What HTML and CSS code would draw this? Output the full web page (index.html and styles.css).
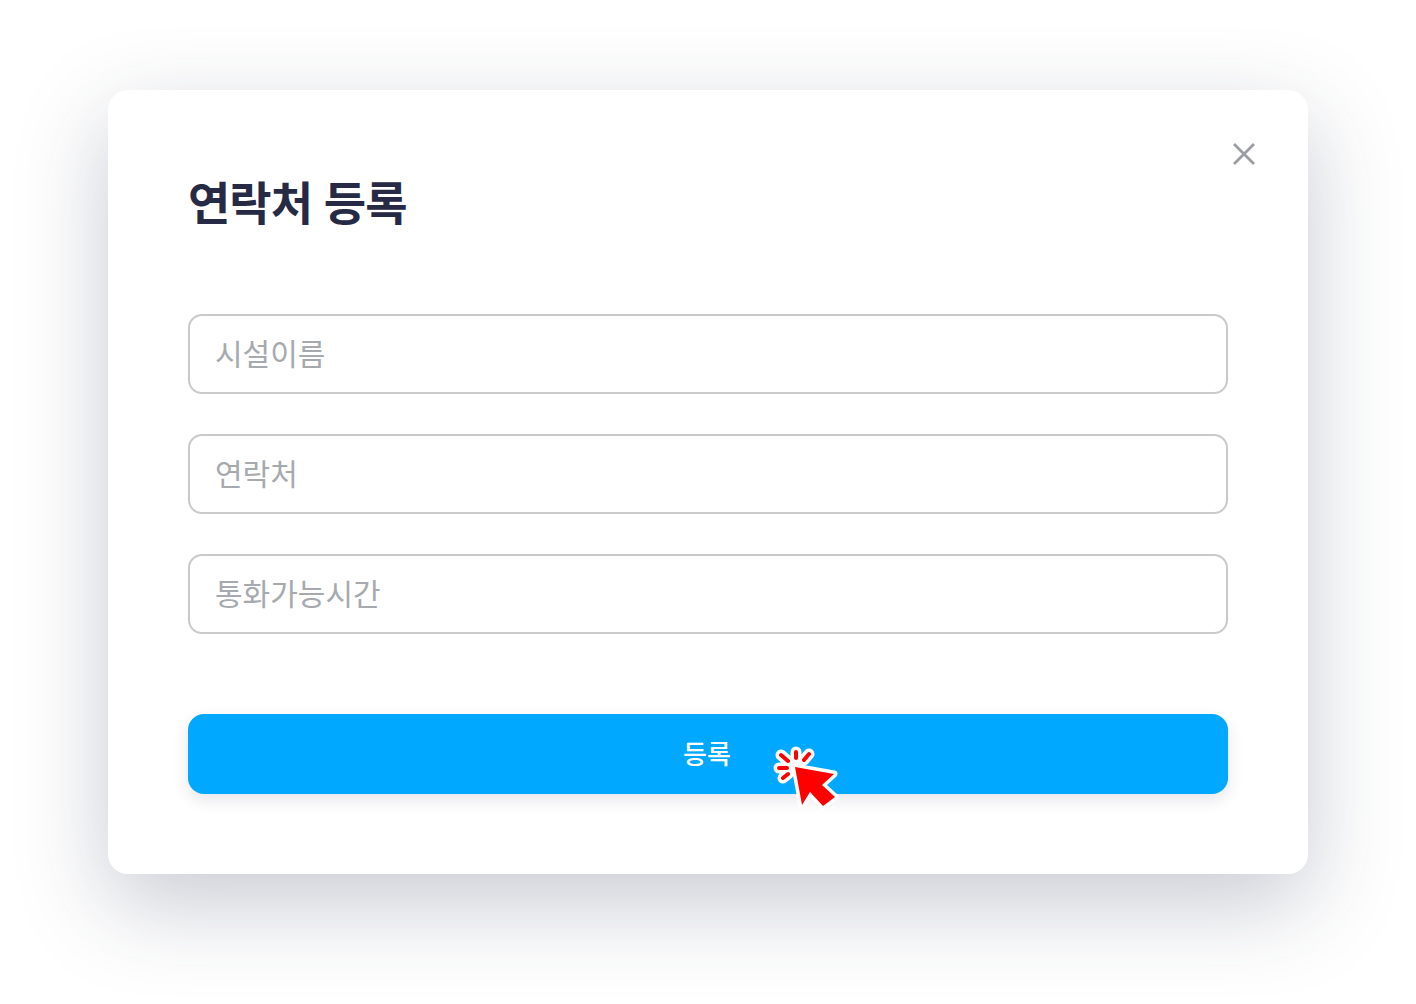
FILE: index.html
```html
<!DOCTYPE html>
<html lang="ko">
<head>
  <meta charset="UTF-8">
  <meta name="viewport" content="width=device-width, initial-scale=1.0">
  <title>연락처 등록</title>
  <link rel="stylesheet" href="styles.css">
</head>
<body>
  <div class="modal">
    <button class="close" aria-label="닫기">
      <svg width="24" height="24" viewBox="0 0 24 24">
        <path d="M2 2L22 22M22 2L2 22" fill="none" stroke="#9a9ea3" stroke-width="2.8"/>
      </svg>
    </button>
    <h1 class="title">연락처 등록</h1>
    <form class="form">
      <input class="field" type="text" placeholder="시설이름">
      <input class="field" type="text" placeholder="연락처">
      <input class="field" type="text" placeholder="통화가능시간">
      <div class="submit-wrap">
        <button class="btn" type="button">등록</button>
        <svg class="cursor" width="90" height="80" viewBox="0 0 90 80">
          <!-- white outline -->
          <g fill="none" stroke="#fff" stroke-width="11" stroke-linecap="round">
            <path d="M36 17V23M49 19L44 25M21 20L28 26M19 33H27M23 43L28 39"/>
          </g>
          <circle cx="34" cy="31" r="10" fill="#fff"/>
          <path d="M35 32L74 39L62 50L75 62L63 71L50 57L42 70Z" fill="#fff" stroke="#fff" stroke-width="7" stroke-linejoin="round"/>
          <!-- red clicks -->
          <g fill="none" stroke="#f00" stroke-width="4" stroke-linecap="round">
            <path d="M36 17V23M49 19L44 25M21 20L28 26M19 33H27M23 43L28 39"/>
          </g>
          <path d="M35 32L74 39L62 50L75 62L63 71L50 57L42 70Z" fill="#f00"/>
        </svg>
      </div>
    </form>
  </div>
</body>
</html>
```

FILE: styles.css
```css
body {
  font-family: "Noto Sans CJK KR", "Noto Sans", sans-serif;
  background-color: #fff;
  margin: 0;
  height: 1004px;
  overflow: hidden;
  display: flex;
  justify-content: center;
  align-items: flex-start;
}

.modal {
  position: relative;
  box-sizing: border-box;
  width: 1200px;
  height: 784px;
  margin-top: 90px;
  padding: 80px;
  background-color: #fff;
  border-radius: 20px;
  box-shadow: 0 30px 90px rgba(40, 48, 80, 0.25);
}

.close {
  position: absolute;
  top: 52px;
  right: 52px;
  width: 24px;
  height: 24px;
  padding: 0;
  border: none;
  background: none;
  cursor: pointer;
}

.close svg {
  display: block;
}

.title {
  margin: 0 0 84px;
  height: 60px;
  line-height: 60px;
  font-size: 46px;
  font-weight: 700;
  letter-spacing: -1px;
  color: #262a45;
}

.form {
  display: flex;
  flex-direction: column;
  gap: 40px;
}

.field {
  box-sizing: border-box;
  width: 100%;
  height: 80px;
  padding: 0 25px 4px;
  border: 2px solid #cacaca;
  border-radius: 14px;
  background-color: #fff;
  font-family: inherit;
  font-size: 30px;
  outline: none;
}

.field::placeholder {
  color: #a6a9ae;
  opacity: 1;
}

.submit-wrap {
  position: relative;
  margin-top: 40px;
}

.btn {
  display: block;
  width: 100%;
  height: 80px;
  padding: 0 2px 4px 0;
  border: none;
  border-radius: 16px;
  background-color: #00a8ff;
  color: #fff;
  font-family: inherit;
  font-size: 26px;
  font-weight: 500;
  box-shadow: 0 6px 16px rgba(40, 48, 80, 0.12);
  cursor: pointer;
}

.cursor {
  position: absolute;
  left: 572px;
  top: 21px;
}
```
